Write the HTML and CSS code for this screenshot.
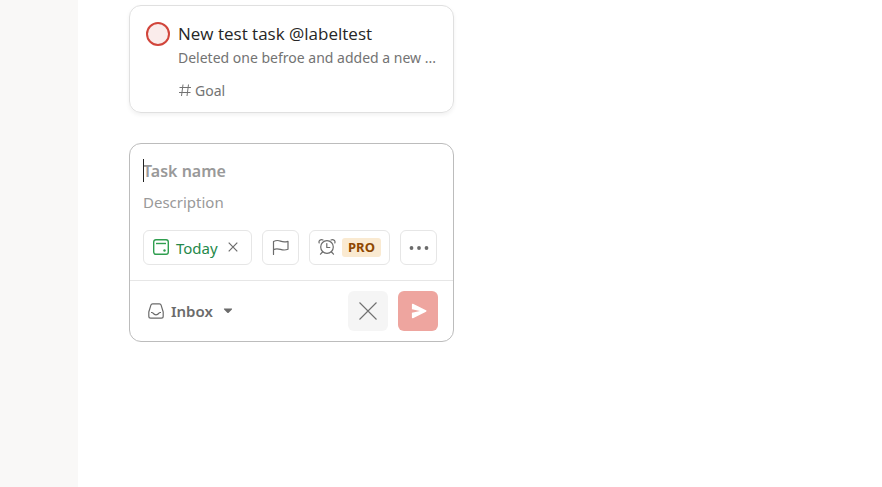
FILE: index.html
```html
<!DOCTYPE html>
<html lang="en">
<head>
<meta charset="utf-8">
<meta name="viewport" content="width=device-width, initial-scale=1">
<title>Tasks</title>
<link rel="stylesheet" href="styles.css">
</head>
<body>
<div class="app">
  <aside class="sidebar"></aside>
  <main class="board">
    <section class="column">
      <article class="card">
        <button class="check" type="button" aria-label="Complete task"></button>
        <div class="card-body">
          <h2 class="card-title">New test task @labeltest</h2>
          <p class="card-desc">Deleted one befroe and added a new ...</p>
          <a class="card-project" href="#goal">
            <svg width="13" height="14" viewBox="0 0 13 14" fill="none" stroke="currentColor"><path d="M5 .5 3.500 12M10.500.5 9 12M1.500 3.500h11.500M1 8.500h11.500"/></svg>
            <span>Goal</span>
          </a>
        </div>
      </article>

      <form class="editor">
        <div class="fields">
          <div class="name-field">
            <input class="name" type="text" placeholder="Task name" aria-label="Task name">
            <span class="caret"></span>
          </div>
          <input class="desc" type="text" placeholder="Description" aria-label="Description">
          <div class="chips">
            <div class="chip due">
              <button class="due-date" type="button">
                <svg width="16" height="18" viewBox="0 0 16 18" fill="none" stroke="currentColor"><rect x=".7" y=".7" width="14.600" height="14.600" rx="2.200" stroke-width="1.400"/><path d="M3 4.500h10" stroke-width="1.400"/><circle cx="11.500" cy="11.500" r="1.200" fill="currentColor" stroke="none"/></svg>
                <span>Today</span>
              </button>
              <button class="due-clear" type="button" aria-label="Remove date">
                <svg width="10" height="12" viewBox="0 0 10 12" fill="none" stroke="currentColor" stroke-width="1.200"><path d="m.7.7 8.600 8.600M9.300.7.7 9.300"/></svg>
              </button>
            </div>
            <button class="chip square" type="button" aria-label="Priority">
              <svg width="18" height="18" viewBox="0 0 18 18" fill="none" stroke="currentColor" stroke-width="1.200" stroke-linejoin="round" stroke-linecap="round"><path d="M1.500 15.500V2.500C4 1.300 6.500 1.300 8.500 2.100s4.800 1 7.500.2v8c-2.500 1-5 .9-7.500.1s-4.800-.9-7 .2"/></svg>
            </button>
            <button class="chip reminder" type="button" aria-label="Reminders, PRO">
              <svg width="18" height="18" viewBox="0 0 18 18" fill="none" stroke="currentColor" stroke-width="1.200" stroke-linecap="round" stroke-linejoin="round"><circle cx="9" cy="8" r="6.300"/><path d="M8.800 4.500v4h3M4.500 13l-2 2.200M13.500 13l2 2.200M1.200 4C.3 2 2.600-.2 5 1M16.800 4C17.700 2 15.400-.2 13 1"/></svg>
              <span class="badge">PRO</span>
            </button>
            <button class="chip square" type="button" aria-label="More actions">
              <svg width="20" height="6" viewBox="0 0 20 6" fill="currentColor"><circle cx="2.500" cy="3" r="1.900"/><circle cx="10" cy="3" r="1.900"/><circle cx="17.500" cy="3" r="1.900"/></svg>
            </button>
          </div>
        </div>
        <footer class="actions">
          <button class="project" type="button">
            <svg width="16" height="16" viewBox="0 0 16 16" fill="none" stroke="currentColor" stroke-width="1.200" stroke-linejoin="round"><path d="M4.600.8h6.800c.8 0 1.500.5 1.700 1.300L15.200 9v4.200c0 1-.8 1.900-1.900 1.900H2.700c-1.100 0-1.900-.8-1.900-1.900V9l2.100-6.900C3.100 1.300 3.800.8 4.600.8Z"/><path d="M3 9.500h.7c.8 0 1.200.3 1.600.9.6 1 1.400 1.400 2.700 1.400s2.100-.4 2.700-1.400c.4-.6.800-.9 1.600-.9h.7"/></svg>
            <span>Inbox</span>
            <svg class="arrow" width="10" height="6" viewBox="0 0 10 6" fill="currentColor"><path d="M1.500.5h7c.6 0 .8.500.4.900L5.700 4.800c-.4.400-1 .4-1.400 0L1.100 1.400C.7 1 .9.500 1.500.5Z"/></svg>
          </button>
          <button class="action cancel" type="button" aria-label="Cancel">
            <svg width="18" height="18" viewBox="0 0 18 18" fill="none" stroke="currentColor" stroke-width="1.100"><path d="m.5.5 17 17M17.500.5l-17 17"/></svg>
          </button>
          <button class="action send" type="submit" aria-label="Add task">
            <svg width="18" height="16" viewBox="0 0 18 16" fill="currentColor"><path d="M4 .8 17 7.300c.7.300.7 1.100 0 1.400L4 15.200c-.6.300-1.100 0-1.100-.7V9.700L11 8 2.900 6.300V1.500C2.900.8 3.400.5 4 .8Z"/></svg>
          </button>
        </footer>
      </form>
    </section>
  </main>
</div>
</body>
</html>
```

FILE: styles.css
```css
* {
  box-sizing: border-box;
}

body {
  margin: 0;
  background: #fff;
  color: #262626;
  font-family: "Noto Sans", "Open Sans", sans-serif;
  font-size: 15px;
}

button,
input {
  margin: 0;
  padding: 0;
  border: 0;
  background: none;
  color: inherit;
  font: inherit;
}

svg {
  display: block;
  flex: none;
}

.app {
  display: flex;
  min-height: 100vh;
}

.sidebar {
  flex: 0 0 78px;
  background: #f9f8f7;
}

.board {
  flex: 1;
  min-width: 0;
  padding: 5px 51px;
}

.column {
  display: flex;
  flex-direction: column;
  gap: 30px;
  max-width: 325px;
}

.card {
  display: flex;
  gap: 8px;
  padding: 16px 16px 12px;
  border: 1px solid #e0e0e0;
  border-radius: 12px;
  box-shadow: 0 2px 4px rgba(0, 0, 0, 0.06);
}

.check {
  flex: none;
  width: 24px;
  height: 24px;
  border: 2px solid #d1453b;
  border-radius: 50%;
  background: #faeceb;
}

.card-body {
  flex: 1;
  min-width: 0;
}

.card-title,
.card-desc {
  margin: 0;
  overflow: hidden;
  font-weight: 400;
  text-overflow: ellipsis;
  white-space: nowrap;
}

.card-title {
  font-family: "Open Sans", "Noto Sans", sans-serif;
  font-size: 17px;
  line-height: 24px;
}

.card-desc {
  color: #737373;
  font-size: 14px;
  line-height: 24px;
}

.card-project {
  display: flex;
  align-items: center;
  gap: 4px;
  margin-top: 12px;
  color: #737373;
  font-size: 14px;
  line-height: 18px;
  text-decoration: none;
}

.editor {
  border: 1px solid #bcbcbc;
  border-radius: 12px;
}

.fields {
  padding: 12px 13px 15px;
}

.name-field {
  position: relative;
}

.name,
.desc {
  display: block;
  width: 100%;
  outline: 0;
}

.name {
  height: 30px;
  font-size: 16px;
  font-weight: 600;
}

.desc {
  height: 32px;
}

.name::placeholder,
.desc::placeholder {
  color: #999;
  opacity: 1;
}

.caret {
  position: absolute;
  top: 3px;
  left: 0;
  width: 1px;
  height: 23px;
  background: #202020;
}

.chips {
  display: flex;
  gap: 10px;
  margin-top: 12px;
}

.chip {
  display: flex;
  align-items: center;
  justify-content: center;
  height: 35px;
  border: 1px solid #e6e6e6;
  border-radius: 6px;
  color: #6b6b6b;
}

.due {
  justify-content: flex-start;
  width: 109px;
  gap: 10px;
  padding-left: 9px;
}

.due-date {
  display: flex;
  align-items: center;
  gap: 7px;
  color: #25884a;
}

.due-date svg {
  color: #2f9e4f;
}

.square {
  width: 37px;
}

.reminder {
  width: 81px;
  gap: 6px;
}

.badge {
  padding: 0 6px;
  border-radius: 3px;
  background: #faead1;
  color: #8f4700;
  font-size: 13px;
  font-weight: 700;
  line-height: 19px;
}

.actions {
  display: flex;
  align-items: center;
  gap: 10px;
  padding: 10px 15px 10px 18px;
  border-top: 1px solid #e6e6e6;
}

.project {
  display: flex;
  align-items: center;
  gap: 7px;
  margin-right: auto;
  color: #6b6b6b;
  font-weight: 600;
}

.arrow {
  margin-left: 3px;
}

.action {
  display: flex;
  align-items: center;
  justify-content: center;
  width: 40px;
  height: 40px;
  border-radius: 6px;
}

.cancel {
  background: #f5f5f5;
  color: #707070;
}

.send {
  background: #eea59f;
  color: #fff;
}
```
